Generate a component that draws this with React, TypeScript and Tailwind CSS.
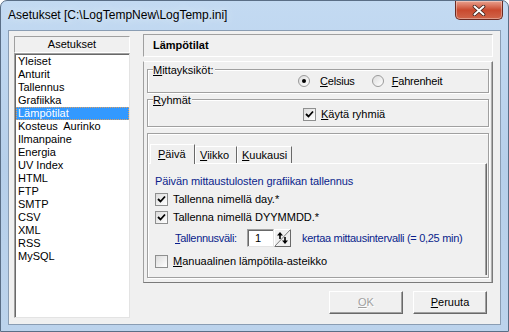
import React from "react";

const ITEMS = [
  "Yleiset", "Anturit", "Tallennus", "Grafiikka", "Lämpötilat", "Kosteus  Aurinko", "Ilmanpaine",
  "Energia", "UV Index", "HTML", "FTP", "SMTP", "CSV", "XML", "RSS", "MySQL",
];

function U({ children }: { children: React.ReactNode }) {
  return <span className="underline underline-offset-[1px]">{children}</span>;
}

function Check({ checked }: { checked?: boolean }) {
  return (
    <span className="w-[13px] h-[13px] bg-gradient-to-br from-[#dcdcdc] to-white border border-[#8e8f8f] flex items-center justify-center shrink-0">
      {checked && (
        <svg width="9" height="9" viewBox="0 0 9 9">
          <path d="M1 4 L3.5 6.5 L8 1.5" stroke="#000" strokeWidth="1.8" fill="none" />
        </svg>
      )}
    </span>
  );
}

function Radio({ checked }: { checked?: boolean }) {
  return (
    <span className="w-[12px] h-[12px] rounded-full bg-gradient-to-br from-[#dcdcdc] to-white border border-[#9a9a9a] flex items-center justify-center shrink-0">
      {checked && <span className="w-[4px] h-[4px] rounded-full bg-black" />}
    </span>
  );
}

function Group({ label, className, children }: { label: React.ReactNode; className?: string; children?: React.ReactNode }) {
  return (
    <div className={`relative border border-[#a0a0a0] shadow-[1px_1px_0_#fff,inset_1px_1px_0_#fff] ${className ?? ""}`}>
      <span className="absolute -top-[6px] left-[5px] bg-[#f0f0f0] pr-[1px] leading-[13px]">{label}</span>
      {children}
    </div>
  );
}

function Button({ children, disabled }: { children: React.ReactNode; disabled?: boolean }) {
  return (
    <div className="w-[74px] h-[23px] border border-t-white border-l-white border-b-[#696969] border-r-[#696969] shadow-[inset_-1px_-1px_0_#a0a0a0] bg-[#f0f0f0] flex items-center justify-center">
      <span className={disabled ? "text-[#a0a0a0] [text-shadow:1px_1px_0_#fff]" : ""}>{children}</span>
    </div>
  );
}

export default function App() {
  return (
    <div
      className="w-[509px] h-[332px] flex flex-col rounded-t-[7px] border border-[#5a6e86] bg-gradient-to-b from-[#c3daf2] via-[#b6cfea] to-[#bcd3ec] text-[11px] leading-[13px] text-black"
      style={{ fontFamily: '"Liberation Sans", Arial, sans-serif' }}
    >
      {/* Title bar */}
      <div className="relative h-[29px] shrink-0 flex items-center pl-[7px] pb-[1px]">
        <span className="text-[12px] text-black [text-shadow:0_0_8px_#e8f2fc]">
          Asetukset [C:\LogTempNew\LogTemp.ini]
        </span>
        <div className="absolute right-[5px] top-[0px] w-[48px] h-[19px] rounded-b-[5px] border border-t-0 border-[#6b2a22] bg-gradient-to-b from-[#e8a08e] via-[#c9492e] to-[#d0654a] flex items-center justify-center shadow-[inset_0_0_0_1px_rgba(255,255,255,0.35)]">
          <svg width="14" height="11" viewBox="0 0 14 11">
            <path d="M2.5 1.5 L11.5 9.5 M11.5 1.5 L2.5 9.5" stroke="#3a1f1a" strokeWidth="3.6" strokeLinecap="round" />
            <path d="M2.5 1.5 L11.5 9.5 M11.5 1.5 L2.5 9.5" stroke="#fff" strokeWidth="2" strokeLinecap="round" />
          </svg>
        </div>
      </div>

      {/* Client */}
      <div className="mx-[7px] mb-[6px] flex-1 flex bg-[#f0f0f0] border border-[#8a9db3]">
        {/* Left list */}
        <div className="w-[116px] ml-[5px] mt-[5px] mb-[6px] flex flex-col">
          <div className="h-[17px] border border-[#a0a0a0] border-r-white border-b-white flex items-center justify-center">
            Asetukset
          </div>
          <div className="flex-1 bg-white border border-[#a0a0a0] border-r-[#e3e3e3] border-b-[#e3e3e3] shadow-[inset_1px_1px_0_#696969] pt-[1px] pl-[1px]">
            {ITEMS.map((it) => (
              <div
                key={it}
                className={`h-[13px] pl-[2px] whitespace-pre ${it === "Lämpötilat" ? "bg-[#3399ff] text-white outline outline-1 outline-dotted outline-[#e0a060] -outline-offset-1" : ""}`}
              >
                {it}
              </div>
            ))}
          </div>
        </div>

        {/* Right side */}
        <div className="w-[350px] ml-[13px] mt-[3px] flex flex-col">
          <div className="h-[23px] border border-[#a0a0a0] border-r-white border-b-white flex items-center pl-[9px] font-bold">
            Lämpötilat
          </div>

          <div className="mt-[4px] h-[222px] border border-t-white border-l-[#a0a0a0] border-r-[#7a7a7a] border-b-[#7a7a7a] shadow-[inset_-1px_0_0_#b0b0b0] px-[3px] pt-[7px] flex flex-col">
            <Group label={<><U>M</U>ittayksiköt:</>} className="h-[24px]">
              <div className="flex items-center h-full pl-[150px]">
                <Radio checked />
                <span className="ml-[10px] tracking-[-0.2px]"><U>C</U>elsius</span>
                <span className="ml-[17px]"><Radio /></span>
                <span className="ml-[8px] tracking-[-0.2px]"><U>F</U>ahrenheit</span>
              </div>
            </Group>

            <Group label={<><U>R</U>yhmät</>} className="h-[28px] mt-[6px]">
              <div className="flex items-center h-full pl-[155px] pt-[2px]">
                <Check checked />
                <span className="ml-[5px]"><U>K</U>äytä ryhmiä</span>
              </div>
            </Group>

            <div className="mt-[6px] h-[145px] border border-[#a0a0a0] shadow-[1px_1px_0_#fff,inset_1px_1px_0_#fff] pt-[9px] pl-[1px] pr-[1px] flex flex-col">
              {/* Tabs */}
              <div className="flex items-end h-[20px] pl-[1px]">
                <div className="h-[20px] w-[45px] border border-b-0 border-l-white border-t-white border-r-[#696969] bg-[#f0f0f0] pl-[7px] pt-[3px] relative z-10 -mb-px">
                  <U>P</U>äivä
                </div>
                <div className="h-[17px] w-[42px] border border-b-0 border-l-white border-t-white border-r-[#696969] pl-[4px] pt-[2px]">
                  <U>V</U>iikko
                </div>
                <div className="h-[17px] w-[55px] border border-b-0 border-l-white border-t-white border-r-[#696969] pl-[4px] pt-[2px]">
                  <U>K</U>uukausi
                </div>
              </div>
              <div className="flex-1 border-t border-t-white border-r border-r-[#696969] shadow-[inset_-1px_0_0_#a0a0a0] pl-[6px] pt-[11px] mb-[2px]">
                <div className="text-[#0a1e8c] tracking-[-0.1px]">Päivän mittaustulosten grafiikan tallennus</div>
                <div className="flex items-center mt-[5px] h-[13px]">
                  <Check checked />
                  <span className="ml-[5px]">Tallenna nimellä day.*</span>
                </div>
                <div className="flex items-center mt-[5px] h-[13px]">
                  <Check checked />
                  <span className="ml-[5px]">Tallenna nimellä DYYMMDD.*</span>
                </div>
                <div className="flex items-center mt-[5px] h-[18px] pl-[20px]">
                  <span className="text-[#0a1e8c] w-[72px] tracking-[-0.3px]"><U>T</U>allennusväli:</span>
                  <div className="w-[27px] h-[18px] bg-white border border-[#a0a0a0] border-r-[#e3e3e3] border-b-[#e3e3e3] shadow-[inset_1px_1px_0_#696969] flex items-center pl-[7px]">
                    1
                  </div>
                  <div className="w-[17px] h-[18px] border border-t-white border-l-white border-r-[#696969] border-b-[#696969] bg-[#f0f0f0]">
                    <svg width="15" height="16" viewBox="0 0 15 16">
                      <path d="M0 16 L15 0" stroke="#7a7a7a" strokeWidth="1" />
                      <path d="M5 2 L2 5.5 L8 5.5 Z" fill="#000" />
                      <rect x="4.2" y="5" width="1.6" height="4" fill="#000" />
                      <path d="M10 14 L7 10.5 L13 10.5 Z" fill="#000" />
                      <rect x="9.2" y="7" width="1.6" height="4" fill="#000" />
                    </svg>
                  </div>
                  <span className="ml-[11px] text-[#0a1e8c] tracking-[-0.3px]">kertaa mittausintervalli (= 0,25 min)</span>
                </div>
                <div className="flex items-center mt-[8px] h-[13px]">
                  <Check />
                  <span className="ml-[5px]"><U>M</U>anuaalinen lämpötila-asteikko</span>
                </div>
              </div>
            </div>
          </div>

          <div className="mt-[8px] flex justify-end gap-[10px] pr-[6px]">
            <Button disabled><U>O</U>K</Button>
            <Button><U>P</U>eruuta</Button>
          </div>
        </div>
      </div>
    </div>
  );
}
